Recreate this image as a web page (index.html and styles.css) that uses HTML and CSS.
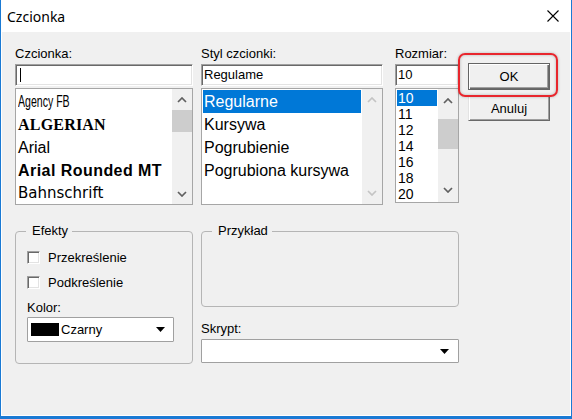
FILE: index.html
```html
<!DOCTYPE html>
<html lang="pl">
<head>
<meta charset="utf-8">
<title>Czcionka</title>
<link rel="stylesheet" href="styles.css">
</head>
<body>
<div class="window">
  <div class="titlebar">
    <span class="title">Czcionka</span>
    <svg class="close" width="12" height="12" viewBox="0 0 12 12"><path d="M0.5 0.5L11.5 11.5M11.5 0.5L0.5 11.5" stroke="#000" stroke-width="1.1" fill="none"/></svg>
  </div>
  <div class="content">
    <div class="top">
      <div class="col col-font">
        <div class="label">Czcionka:</div>
        <div class="edit"><span class="caret"></span></div>
        <div class="list list-font">
          <div class="items">
            <div class="item"><span class="f-agency">Agency FB</span></div>
            <div class="item"><span class="f-alg">ALGERIAN</span></div>
            <div class="item">Arial</div>
            <div class="item f-bold">Arial Rounded MT</div>
            <div class="item f-bahn">Bahnschrift</div>
          </div>
          <div class="sb">
            <div class="sb-btn"><svg width="10" height="6" viewBox="0 0 10 6"><polyline points="1,5 5,1 9,5" class="chev"/></svg></div>
            <div class="sb-track"><div class="thumb"></div></div>
            <div class="sb-btn"><svg width="10" height="6" viewBox="0 0 10 6"><polyline points="1,1 5,5 9,1" class="chev"/></svg></div>
          </div>
        </div>
      </div>
      <div class="col col-style">
        <div class="label">Styl czcionki:</div>
        <div class="edit">Regulame</div>
        <div class="list list-style">
          <div class="items">
            <div class="item sel">Regularne</div>
            <div class="item">Kursywa</div>
            <div class="item">Pogrubienie</div>
            <div class="item">Pogrubiona kursywa</div>
          </div>
          <div class="sb">
            <div class="sb-btn"><svg width="10" height="6" viewBox="0 0 10 6"><polyline points="1,5 5,1 9,5" class="chev off"/></svg></div>
            <div class="sb-track"></div>
            <div class="sb-btn"><svg width="10" height="6" viewBox="0 0 10 6"><polyline points="1,1 5,5 9,1" class="chev off"/></svg></div>
          </div>
        </div>
      </div>
      <div class="col col-size">
        <div class="label">Rozmiar:</div>
        <div class="edit">10</div>
        <div class="list list-size">
          <div class="items">
            <div class="item sel">10</div>
            <div class="item">11</div>
            <div class="item">12</div>
            <div class="item">14</div>
            <div class="item">16</div>
            <div class="item">18</div>
            <div class="item">20</div>
          </div>
          <div class="sb">
            <div class="sb-btn"><svg width="10" height="6" viewBox="0 0 10 6"><polyline points="1,5 5,1 9,5" class="chev"/></svg></div>
            <div class="sb-track"><div class="thumb"></div></div>
            <div class="sb-btn"><svg width="10" height="6" viewBox="0 0 10 6"><polyline points="1,1 5,5 9,1" class="chev"/></svg></div>
          </div>
        </div>
      </div>
      <div class="col col-btns">
        <div class="ok-wrap"><div class="btn btn-default">OK</div></div>
        <div class="btn btn-cancel">Anuluj</div>
      </div>
    </div>
    <div class="bottom">
      <fieldset class="group g-efx">
        <legend class="legend">Efekty</legend>
        <div class="efx-body">
          <div class="chk-row"><span class="chk"></span><span>Przekreślenie</span></div>
          <div class="chk-row"><span class="chk"></span><span>Podkreślenie</span></div>
          <div class="label label-kolor">Kolor:</div>
          <div class="combo combo-color">
            <span class="swatch"></span><span class="txt">Czarny</span>
            <svg width="9" height="5" viewBox="0 0 9 5"><polygon points="0,0 9,0 4.5,5" fill="#000"/></svg>
          </div>
        </div>
      </fieldset>
      <div class="right">
        <fieldset class="group g-sample">
          <legend class="legend">Przykład</legend>
          <div class="sample"></div>
        </fieldset>
        <div class="label label-skrypt">Skrypt:</div>
        <div class="combo combo-script">
          <span class="txt"></span>
          <svg width="9" height="5" viewBox="0 0 9 5"><polygon points="0,0 9,0 4.5,5" fill="#000"/></svg>
        </div>
      </div>
    </div>
  </div>
</div>
</body>
</html>
```
FILE: styles.css
```css
* { box-sizing: border-box; }

body {
  margin: 0;
  font-family: "Liberation Sans", Arial, sans-serif;
  font-size: 13px;
  color: #000;
  background: #fff;
}

.window {
  width: 572px;
  height: 419px;
  border-left: 1px solid #1a7ad4;
  border-right: 1px solid #1a7ad4;
  border-bottom: 3px solid #1a7ad4;
  display: flex;
  flex-direction: column;
  background: #f0f0f0;
}

.titlebar {
  height: 32px;
  flex: none;
  background: #fff;
  display: flex;
  align-items: center;
  justify-content: space-between;
  padding: 0 12px 0 6px;
}

.title {
  font-family: "Noto Sans", sans-serif;
  font-size: 14px;
}

.content {
  flex: 1;
  padding: 14px 0 0 14px;
  box-shadow: inset 1px 0 #fff, inset -1px 0 #fff, inset 0 -1px #fff;
}

.top {
  display: flex;
  align-items: flex-start;
}

.col-font { width: 178px; }
.col-style { width: 182px; margin-left: 8px; }
.col-size { width: 64px; margin-left: 12px; }
.col-btns {
  width: 82px;
  margin-left: 9px;
  margin-top: 17px;
  display: flex;
  flex-direction: column;
  gap: 5px;
}

.label {
  height: 16px;
  line-height: 16px;
  margin-bottom: 2px;
  white-space: nowrap;
}

.edit {
  height: 22px;
  background: #fff;
  border: 1px solid;
  border-color: #a0a0a0 #fff #fff #a0a0a0;
  box-shadow: inset 1px 1px #696969, inset -1px -1px #e3e3e3;
  padding-left: 2px;
  display: flex;
  align-items: center;
  line-height: 16px;
}

.caret {
  width: 1px;
  height: 14px;
  background: #000;
  margin-left: 2px;
}

.list {
  margin-top: 2px;
  height: 117px;
  background: #fff;
  border: 1px solid #a6a6a6;
  display: flex;
}

.list-size { height: 115px; }

.items {
  flex: 1;
  padding: 1px;
  overflow: hidden;
}

.item {
  height: 23px;
  line-height: 23px;
  padding-left: 1px;
  white-space: nowrap;
  font-size: 16px;
}

.list-size .item {
  height: 16px;
  line-height: 16px;
  font-size: 14px;
}

.item.sel {
  background: #0078d7;
  color: #fff;
}

.f-agency {
  display: inline-block;
  font-size: 16.5px;
  transform: scaleX(0.64);
  transform-origin: left center;
}

.f-alg {
  font-family: "Liberation Serif", serif;
  font-weight: bold;
  font-size: 16px;
  letter-spacing: 0.2px;
}

.f-bold {
  font-weight: bold;
  letter-spacing: 0.45px;
}

.f-bahn {
  font-family: "DejaVu Sans", sans-serif;
  font-size: 15px;
}

.sb {
  width: 20px;
  flex: none;
  background: #f0f0f0;
  display: flex;
  flex-direction: column;
}

.sb-btn {
  height: 22px;
  flex: none;
  display: flex;
  align-items: center;
  justify-content: center;
}

.list-font .sb-btn { height: 21px; }
.list-size .sb-btn { height: 24px; }

.sb-track { flex: 1; }

.thumb {
  height: 22px;
  background: #cdcdcd;
}

.list-size .sb-track { padding-top: 6px; }
.list-size .thumb { height: 30px; }

.chev {
  fill: none;
  stroke: #606060;
  stroke-width: 1.7;
}

.chev.off { stroke: #c4c4c4; }

.btn {
  display: flex;
  align-items: center;
  justify-content: center;
  background: #f0f0f0;
}

.btn-default {
  height: 27px;
  border: 1px solid #646464;
  box-shadow: inset 1px 1px #fff, inset -1px -1px #696969, inset -2px -2px #a0a0a0;
}

.btn-cancel {
  height: 26px;
  border: 1px solid;
  border-color: #e3e3e3 #696969 #696969 #e3e3e3;
  box-shadow: inset 1px 1px #fff, inset -1px -1px #a0a0a0;
}

.ok-wrap { position: relative; }

.ok-wrap::after {
  content: "";
  position: absolute;
  left: -10px;
  top: -10px;
  right: -8px;
  bottom: -7px;
  border: 2px solid #e8262d;
  border-radius: 7px;
  box-shadow: 0 0 3px rgba(0, 0, 0, 0.25), inset 0 0 3px rgba(0, 0, 0, 0.25);
  pointer-events: none;
}

.bottom {
  display: flex;
  align-items: flex-start;
  margin-top: 18px;
}

.group {
  margin: 0;
  min-width: 0;
  border: 1px solid #b5b5b5;
  border-radius: 4px;
}

.legend {
  padding: 0 4px 0 6px;
  font-size: 13px;
  line-height: 16px;
}

.g-efx {
  width: 178px;
  padding: 6px 10px 21px 10px;
}

.efx-body { padding-left: 1px; }

.chk-row {
  height: 25px;
  display: flex;
  align-items: center;
  gap: 8px;
}

.chk {
  width: 13px;
  height: 13px;
  background: #fff;
  border: 1px solid;
  border-color: #a0a0a0 #fff #fff #a0a0a0;
  box-shadow: inset 1px 1px #696969, inset -1px -1px #e3e3e3;
}

.label-kolor { margin-top: 5px; margin-bottom: 1px; }

.combo {
  background: #fff;
  border: 1px solid #a0a0a0;
  border-radius: 1px;
  display: flex;
  align-items: center;
}

.combo .txt { flex: 1; }

.combo-color {
  width: 147px;
  height: 25px;
  padding: 0 8px 0 3px;
}

.swatch {
  width: 28px;
  height: 13px;
  background: #000;
  margin-right: 2px;
}

.right {
  width: 258px;
  margin-left: 8px;
}

.g-sample { padding: 0 10px; }

.sample { height: 67px; }

.label-skrypt { margin-top: 14px; }

.combo-script {
  height: 24px;
  padding: 0 9px 0 3px;
}
```
